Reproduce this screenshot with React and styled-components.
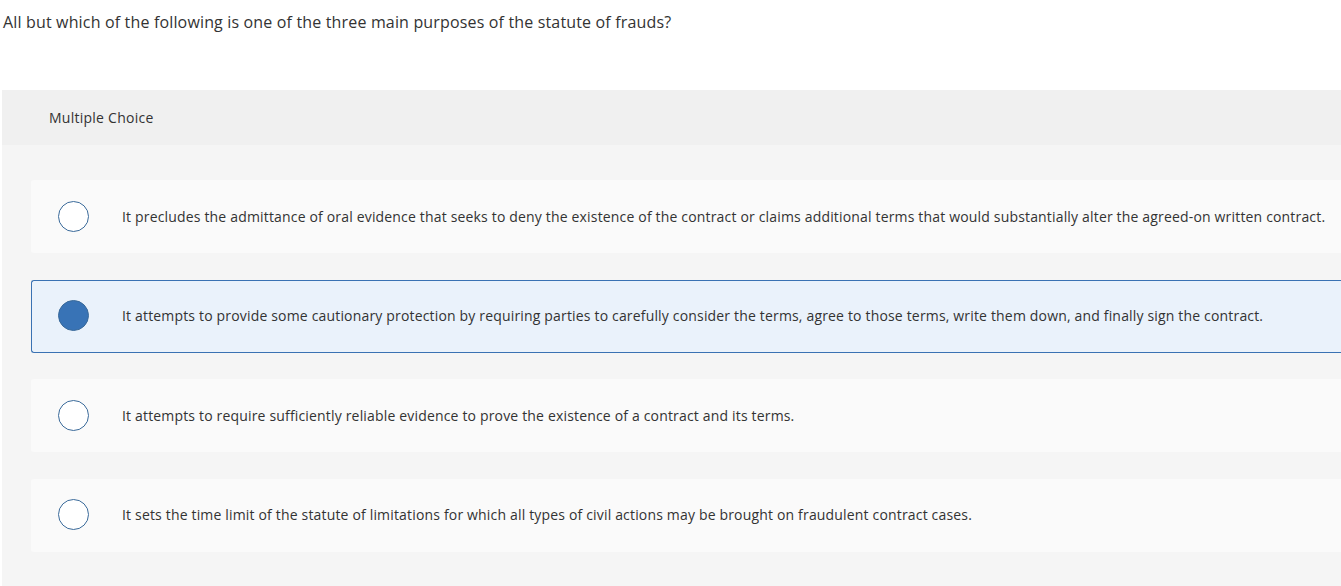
import React, { useState } from 'react';
import styled, { createGlobalStyle } from 'styled-components';

const Global = createGlobalStyle`
  html, body {
    margin: 0;
    padding: 0;
    background: #ffffff;
    font-family: "Open Sans", Lato, sans-serif;
    color: #333333;
  }
`;

const Page = styled.div`
  width: 1341px;
  height: 586px;
  overflow: hidden;
`;

const Prompt = styled.p`
  margin: 0;
  padding: 12px 0 0 3px;
  height: 90px;
  box-sizing: border-box;
  font-size: 16px;
  letter-spacing: 0.16px;
  line-height: 20px;
  color: #333333;
`;

const Panel = styled.section`
  margin-left: 2px;
  background: #f5f5f5;
  min-height: 496px;
`;

const PanelHead = styled.div`
  height: 55px;
  background: #f0f0f0;
  display: flex;
  align-items: center;
  padding-left: 47px;
  font-size: 14px;
  letter-spacing: 0.25px;
  color: #333333;
`;

const Choices = styled.div`
  display: flex;
  flex-direction: column;
  gap: 26.5px;
  padding: 35px 0 0 29px;
`;

const Choice = styled.label`
  display: flex;
  align-items: center;
  height: 73px;
  box-sizing: border-box;
  padding-left: 26px;
  padding-bottom: 1px;
  border-radius: 3px 0 0 3px;
  cursor: pointer;
  background: ${p => (p.$selected ? '#eaf2fb' : '#fafafa')};
  border: 1px solid ${p => (p.$selected ? '#3a72b3' : 'transparent')};
  border-right: none;
`;

const Radio = styled.span`
  width: 31px;
  height: 31px;
  box-sizing: border-box;
  border-radius: 50%;
  flex: none;
  border: 1.5px solid #3a6a9a;
  background: ${p => (p.$checked ? '#3873b6' : '#ffffff')};
`;

const ChoiceText = styled.span`
  margin-left: 33px;
  font-size: 14px;
  letter-spacing: 0.17px;
  color: #333333;
  white-space: nowrap;
`;

const options = [
  'It precludes the admittance of oral evidence that seeks to deny the existence of the contract or claims additional terms that would substantially alter the agreed-on written contract.',
  'It attempts to provide some cautionary protection by requiring parties to carefully consider the terms, agree to those terms, write them down, and finally sign the contract.',
  'It attempts to require sufficiently reliable evidence to prove the existence of a contract and its terms.',
  'It sets the time limit of the statute of limitations for which all types of civil actions may be brought on fraudulent contract cases.',
];

function App() {
  const [picked, setPicked] = useState(1);

  return (
    <Page>
      <Global />
      <Prompt>All but which of the following is one of the three main purposes of the statute of frauds?</Prompt>
      <Panel>
        <PanelHead>Multiple Choice</PanelHead>
        <Choices>
          {options.map((text, i) => (
            <Choice key={i} $selected={picked === i} onClick={() => setPicked(i)}>
              <Radio $checked={picked === i} />
              <ChoiceText>{text}</ChoiceText>
            </Choice>
          ))}
        </Choices>
      </Panel>
    </Page>
  );
}

export default App;
